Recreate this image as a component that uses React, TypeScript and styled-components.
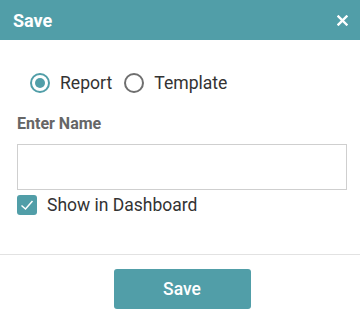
import styled, { createGlobalStyle } from "styled-components";

const GlobalStyle = createGlobalStyle`
  html, body { margin: 0; padding: 0; background: #fff; }
  body { font-family: Roboto, "Liberation Sans", Arial, sans-serif; }
  * { box-sizing: border-box; }
`;

const teal = "#519ea8";

const Dialog = styled.div`
  width: 360px;
  height: 317px;
  display: flex;
  flex-direction: column;
  background: #fff;
`;

const Header = styled.div`
  height: 40px;
  background: ${teal};
  display: flex;
  align-items: center;
  justify-content: space-between;
  padding: 0 12px 0 13px;
`;

const Title = styled.h2`
  margin: 0;
  color: #fff;
  font-size: 18px;
  font-weight: 700;
`;

const Close = styled.button`
  border: 0;
  background: none;
  padding: 0;
  width: 12px;
  height: 12px;
  display: flex;
  align-items: center;
  justify-content: center;
  cursor: pointer;
`;

const Body = styled.div`
  padding: 32px 13px 0 17px;
  height: 215px;
  border-bottom: 1px solid #e2e2e2;
`;

const RadioRow = styled.div`
  display: flex;
  align-items: center;
  padding-left: 13px;
  height: 22px;
`;

const RadioLabel = styled.label`
  display: flex;
  align-items: center;
  font-size: 17.6px;
  color: #333;
  margin-right: 12px;
  cursor: pointer;
`;

const RadioCircle = styled.span<{ checked: boolean }>`
  width: 20px;
  height: 20px;
  border-radius: 50%;
  border: 2px solid ${(p) => (p.checked ? teal : "#6f6f6f")};
  display: flex;
  align-items: center;
  justify-content: center;
  margin-right: 10px;
  &::after {
    content: "";
    width: 10px;
    height: 10px;
    border-radius: 50%;
    background: ${(p) => (p.checked ? teal : "transparent")};
  }
`;

const FieldLabel = styled.div`
  margin-top: 21px;
  font-size: 16px;
  font-weight: 700;
  color: #666;
  line-height: 18px;
`;

const Input = styled.input`
  display: block;
  margin-top: 11px;
  width: 330px;
  height: 46px;
  border: 1px solid #cfcfcf;
  outline: none;
`;

const CheckRow = styled.label`
  display: flex;
  align-items: center;
  margin-top: 5px;
  font-size: 17.5px;
  color: #333;
`;

const CheckBox = styled.span`
  width: 20px;
  height: 20px;
  border-radius: 3px;
  background: ${teal};
  display: flex;
  align-items: center;
  justify-content: center;
  margin-right: 10px;
`;

const Footer = styled.div`
  flex: 1;
  display: flex;
  justify-content: center;
  padding: 14px 0 0 4px;
`;

const SaveButton = styled.button`
  width: 137px;
  height: 40px;
  border: 0;
  border-radius: 3px;
  background: ${teal};
  color: #fff;
  font-family: Roboto, "Liberation Sans", Arial, sans-serif;
  font-size: 17.5px;
  font-weight: 500;
  cursor: pointer;
`;

export default function App() {
  return (
    <Dialog>
      <GlobalStyle />
      <Header>
        <Title>Save</Title>
        <Close aria-label="close">
          <svg width="11" height="11" viewBox="0 0 11 11">
            <path d="M1.5 1.5 L9.5 9.5 M9.5 1.5 L1.5 9.5" stroke="#fff" strokeWidth="2.4" strokeLinecap="square" />
          </svg>
        </Close>
      </Header>
      <Body>
        <RadioRow>
          <RadioLabel>
            <RadioCircle checked />
            Report
          </RadioLabel>
          <RadioLabel>
            <RadioCircle checked={false} />
            Template
          </RadioLabel>
        </RadioRow>
        <FieldLabel>Enter Name</FieldLabel>
        <Input />
        <CheckRow>
          <CheckBox>
            <svg width="16" height="16" viewBox="0 0 16 16">
              <path d="M2.5 8.5 L6.5 12 L13.5 4" fill="none" stroke="#fff" strokeWidth="1.5" />
            </svg>
          </CheckBox>
          Show in Dashboard
        </CheckRow>
      </Body>
      <Footer>
        <SaveButton>Save</SaveButton>
      </Footer>
    </Dialog>
  );
}
